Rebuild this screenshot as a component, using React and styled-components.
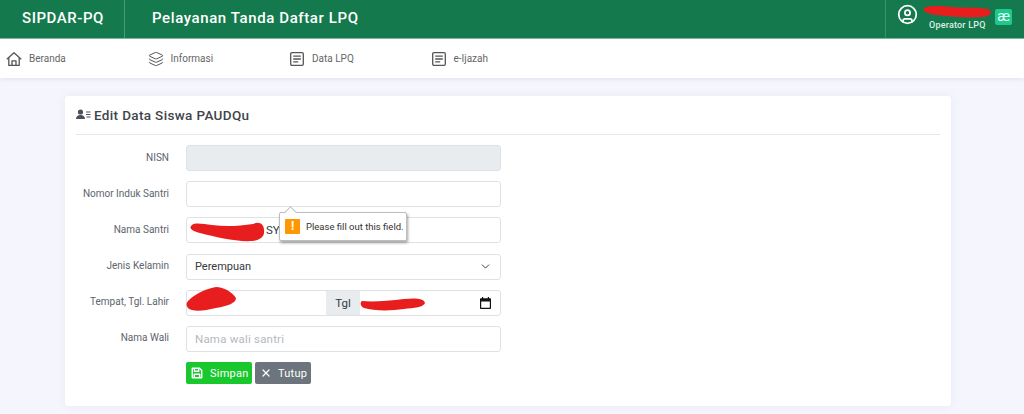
import React from "react";
import styled, { createGlobalStyle } from "styled-components";
import { Layers, UserCircle, X, ChevronDown } from "lucide-react";

const GlobalStyle = createGlobalStyle`
  html, body { margin: 0; padding: 0; height: 100%; overflow: hidden; }
  body {
    background: #f5f5fe;
    font-family: Roboto, "Liberation Sans", sans-serif;
    color: #495057;
  }
`;

const HomeIcon = () => (
  <svg width="16" height="16" viewBox="0 0 16 16" fill="none" stroke="currentColor" strokeWidth="1.3" strokeLinejoin="round">
    <path d="M.8 8.200 8 1.800l7.200 6.400" />
    <path d="M2.800 7v7.400h10.400V7" />
    <path d="M6 14.400V9.800h4v4.600" />
  </svg>
);

const ArticleIcon = () => (
  <svg width="16" height="16" viewBox="0 0 16 16" fill="none" stroke="currentColor" strokeWidth="1.300">
    <rect x="1.700" y="1.700" width="12.600" height="12.600" rx="1.200" />
    <path d="M4.200 5.200h7.600M4.200 8h7.600M4.200 10.800h5" />
  </svg>
);

const navItems = [
  { icon: <HomeIcon />, label: "Beranda" },
  { icon: <Layers size={16} strokeWidth={1.5} />, label: "Informasi" },
  { icon: <ArticleIcon />, label: "Data LPQ" },
  { icon: <ArticleIcon />, label: "e-Ijazah" },
];

function Scribble({ d, width, height, top, left }) {
  return (
    <ScribbleSvg width={width} height={height} viewBox={`0 0 ${width} ${height}`} $top={top} $left={left}>
      <path d={d} fill="#e81e1e" />
    </ScribbleSvg>
  );
}

export default function App() {
  return (
    <>
      <GlobalStyle />
      <Header>
        <Brand>SIPDAR-PQ</Brand>
        <Title>Pelayanan Tanda Daftar LPQ</Title>
        <UserBox>
          <UserCircle size={21} strokeWidth={2} color="#fff" />
          <UserText>
            <Scribble width={69} height={13} top={-15} left={-6} d="M1 3C6 0 18 1 30 2C44 3 58 2 65 4C70 7 68 11 60 12C46 13 30 12 14 10C5 9 -1 6 1 3Z" />
            <UserRole>Operator LPQ</UserRole>
          </UserText>
          <Badge>æ</Badge>
        </UserBox>
      </Header>

      <Nav>
        {navItems.map((item) => (
          <NavItem key={item.label}>
            {item.icon}
            <span>{item.label}</span>
          </NavItem>
        ))}
      </Nav>

      <Card>
        <CardTitle>
          <svg width="15" height="12" viewBox="0 0 15 12" fill="#495057">
            <circle cx="4.500" cy="3" r="2.600" />
            <path d="M0 10c0-2.600 2-4 4.500-4S9 7.400 9 10z" />
            <path d="M10 2.500h4.500v1H10zM10 5h4.500v1H10zM10.500 7.500h4v1h-4z" />
          </svg>
          Edit Data Siswa PAUDQu
        </CardTitle>
        <Rule />
        <Form>
          <Row>
            <Label>NISN</Label>
            <Input disabled />
          </Row>
          <Row>
            <Label>Nomor Induk Santri</Label>
            <Input />
            <Tooltip>
              <TooltipArrow />
              <WarnIcon>!</WarnIcon>
              Please fill out this field.
            </Tooltip>
          </Row>
          <Row>
            <Label>Nama Santri</Label>
            <Input defaultValue="SY" $indent={79} />
            <Scribble width={75} height={20} top={5} left={190} d="M1 4C4 0 12 2 22 3C36 5 50 4 63 2C69 -1 74 2 74 8C75 14 71 18 62 19C46 20 26 15 10 11C3 9 -1 7 1 4Z" />
          </Row>
          <Row>
            <Label>Jenis Kelamin</Label>
            <SelectBox>
              Perempuan
              <ChevronDown size={13} strokeWidth={1.800} color="#343a40" />
            </SelectBox>
          </Row>
          <Row>
            <Label>Tempat, Tgl. Lahir</Label>
            <InputGroup>
              <GroupLeft />
              <Addon>Tgl</Addon>
              <GroupRight>
                <svg width="11" height="12" viewBox="0 0 11 12" fill="#111">
                  <path d="M2 0h1.200v1.200h4.600V0H9v1.200h1c.6 0 1 .4 1 1V11c0 .6-.4 1-1 1H1c-.6 0-1-.4-1-1V2.200c0-.6.4-1 1-1h1zM1.200 4.400v6.400h8.600V4.400z" />
                </svg>
              </GroupRight>
            </InputGroup>
            <Scribble width={51} height={25} top={-3} left={186} d="M2 14C8 8 18 2 30 0C38 0 46 5 50 11C50 16 42 19 30 21C18 24 6 25 2 21C0 19 0 16 2 14Z" />
            <Scribble width={65} height={13} top={8} left={360} d="M2 3C12 4 28 3 44 1C54 0 64 0 65 5C64 9 54 10 44 11C30 13 14 13 4 10C0 8 0 4 2 3Z" />
          </Row>
          <Row>
            <Label>Nama Wali</Label>
            <Input placeholder="Nama wali santri" />
          </Row>
          <Actions>
            <Button $bg="#19c82d" $width={66} $gap={7}>
              <svg width="12" height="12" viewBox="0 0 14 14" fill="none" stroke="currentColor" strokeWidth="1.700" strokeLinejoin="round">
                <path d="M1.500 1.500h8.500l2.500 2.500v8.500h-11z" />
                <path d="M4 1.500v3.500h5V1.500" />
                <path d="M3.800 12.500V8.500h6.400v4" />
              </svg>
              Simpan
            </Button>
            <Button $bg="#6c757d" $width={56} $gap={6}>
              <X size={12} strokeWidth={2.500} />
              Tutup
            </Button>
          </Actions>
        </Form>
      </Card>
    </>
  );
}

const Header = styled.header`
  display: flex;
  align-items: stretch;
  height: 38px;
  background: #147a4d;
  color: #fff;
  border-bottom: 1px solid #7fb79d;
`;

const Brand = styled.div`
  width: 125px;
  box-sizing: border-box;
  padding: 0 0 2px 22px;
  display: flex;
  align-items: center;
  font-size: 15px;
  font-weight: 500;
  letter-spacing: 0.55px;
  border-right: 1px solid #4a9a76;
`;

const Title = styled.div`
  flex: 1;
  padding: 0 0 2px 27px;
  display: flex;
  align-items: center;
  font-size: 15px;
  font-weight: 500;
  letter-spacing: 0.6px;
`;

const UserBox = styled.div`
  width: 139px;
  box-sizing: border-box;
  display: flex;
  align-items: flex-start;
  padding: 4px 0 0 11px;
  border-left: 1px solid #3d9169;
  position: relative;
`;

const UserText = styled.div`
  position: relative;
  width: 66px;
  margin: 16px 0 0 11px;
`;

const UserRole = styled.div`
  font-size: 9px;
  font-weight: 500;
  letter-spacing: 0.2px;
  line-height: 11px;
  white-space: nowrap;
  color: #dcefe6;
`;

const Badge = styled.div`
  width: 17px;
  height: 16px;
  margin-top: 5px;
  border-radius: 2px;
  background: #1dc98e;
  font-size: 15px;
  line-height: 14px;
  text-align: center;
  color: #e8fff5;
`;

const ScribbleSvg = styled.svg`
  position: absolute;
  top: ${(p) => p.$top}px;
  left: ${(p) => p.$left}px;
  pointer-events: none;
`;

const Nav = styled.nav`
  display: flex;
  align-items: center;
  height: 39px;
  padding-left: 6px;
  background: #fff;
  box-shadow: 0 2px 4px rgba(60, 60, 120, 0.08);
`;

const NavItem = styled.div`
  width: 141.500px;
  display: flex;
  align-items: center;
  gap: 7px;
  font-size: 10px;
  letter-spacing: 0;
  color: #666;
  svg { color: #555; }
`;

const Card = styled.main`
  margin: 18px 73px 0 65px;
  height: 310px;
  box-sizing: border-box;
  padding: 11px 11px 0;
  background: #fff;
  border-radius: 3px;
  box-shadow: 0 0 8px rgba(90, 90, 160, 0.08);
`;

const CardTitle = styled.h2`
  margin: 0;
  display: flex;
  align-items: center;
  gap: 3px;
  height: 16px;
  font-size: 13.500px;
  font-weight: 500;
  letter-spacing: 0.35px;
  color: #3f454b;
`;

const Rule = styled.div`
  height: 1px;
  margin-top: 11px;
  background: #e6e8ea;
`;

const Form = styled.form`
  margin-top: 10px;
  display: flex;
  flex-direction: column;
  gap: 10.200px;
`;

const Row = styled.div`
  position: relative;
  display: flex;
  align-items: center;
  height: 26px;
  margin-left: -76px;
  padding-left: 76px;
`;

const Label = styled.label`
  width: 93px;
  margin-right: 17px;
  margin-top: -2px;
  text-align: right;
  font-size: 10px;
  letter-spacing: 0;
  color: #5c656d;
  white-space: nowrap;
`;

const fieldBox = `
  width: 315px;
  height: 26px;
  box-sizing: border-box;
  border: 1px solid #dee2e6;
  border-radius: 3px;
  font-family: Roboto, "Liberation Sans", sans-serif;
  font-size: 11.500px;
  color: #343a40;
`;

const Input = styled.input`
  ${fieldBox}
  padding: 0 8px 0 ${(p) => p.$indent || 8}px;
  background: #fff;
  outline: none;
  &:disabled { background: #e9ecef; }
  &::placeholder { color: #b5b9bd; letter-spacing: 0.2px; }
`;

const SelectBox = styled.div`
  ${fieldBox}
  display: flex;
  align-items: center;
  justify-content: space-between;
  padding: 0 8px;
  font-size: 11px;
`;

const InputGroup = styled.div`
  ${fieldBox}
  display: flex;
  overflow: hidden;
`;

const GroupLeft = styled.div`
  width: 139px;
`;

const Addon = styled.div`
  width: 34px;
  background: #e9ecef;
  display: flex;
  align-items: center;
  justify-content: center;
`;

const GroupRight = styled.div`
  flex: 1;
  display: flex;
  align-items: center;
  justify-content: flex-end;
  padding-right: 9px;
`;

const Tooltip = styled.div`
  position: absolute;
  z-index: 2;
  top: 31px;
  left: 279px;
  width: 128px;
  height: 29px;
  box-sizing: border-box;
  display: flex;
  align-items: center;
  gap: 6px;
  padding-left: 5px;
  background: #fff;
  border: 1px solid #bdbdbd;
  border-radius: 2px;
  box-shadow: 1px 2px 3px rgba(0, 0, 0, 0.35);
  font-size: 9.500px;
  color: #333;
  white-space: nowrap;
`;

const TooltipArrow = styled.span`
  position: absolute;
  top: -5px;
  left: 6px;
  width: 8px;
  height: 8px;
  background: #fff;
  border-top: 1px solid #bdbdbd;
  border-left: 1px solid #bdbdbd;
  transform: rotate(45deg);
`;

const WarnIcon = styled.span`
  width: 15px;
  height: 15px;
  border-radius: 1px;
  background: #ff9800;
  color: #fff;
  font-size: 12px;
  font-weight: 700;
  line-height: 15px;
  text-align: center;
`;

const Actions = styled.div`
  display: flex;
  gap: 3px;
  margin-left: 110px;
`;

const Button = styled.button`
  width: ${(p) => p.$width}px;
  height: 22px;
  padding: 0 0 0 5px;
  display: flex;
  align-items: center;
  gap: ${(p) => p.$gap}px;
  border: none;
  border-radius: 2px;
  background: ${(p) => p.$bg};
  color: #fff;
  font-family: Roboto, "Liberation Sans", sans-serif;
  font-size: 11px;
  letter-spacing: 0.25px;
`;
